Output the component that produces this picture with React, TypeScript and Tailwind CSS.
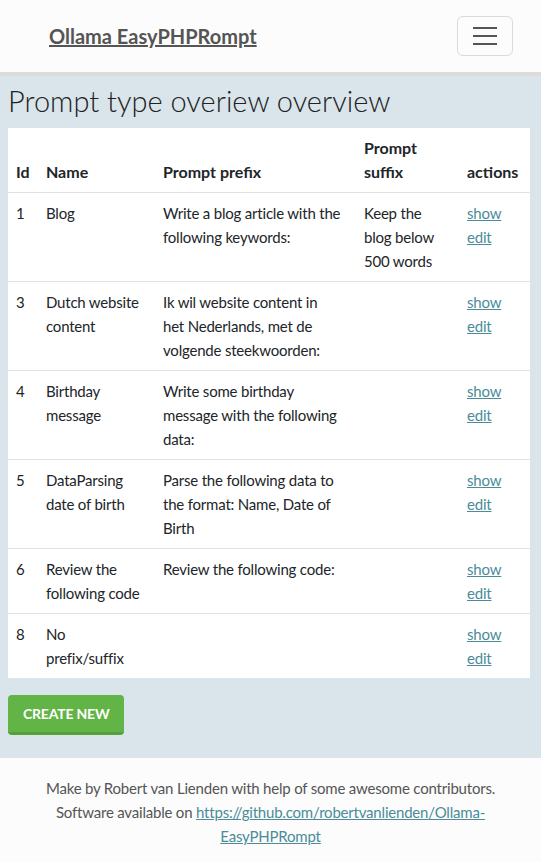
import React from "react";

const rows = [
  { id: "1", name: ["Blog"], prefix: ["Write a blog article with the", "following keywords:"], suffix: ["Keep the", "blog below", "500 words"] },
  { id: "3", name: ["Dutch website", "content"], prefix: ["Ik wil website content in", "het Nederlands, met de", "volgende steekwoorden:"], suffix: [] },
  { id: "4", name: ["Birthday", "message"], prefix: ["Write some birthday", "message with the following", "data:"], suffix: [] },
  { id: "5", name: ["DataParsing", "date of birth"], prefix: ["Parse the following data to", "the format: Name, Date of", "Birth"], suffix: [] },
  { id: "6", name: ["Review the", "following code"], prefix: ["Review the following code:"], suffix: [] },
  { id: "8", name: ["No", "prefix/suffix"], prefix: [], suffix: [] },
];

function Lines({ lines }: { lines: string[] }) {
  return (
    <>
      {lines.map((l, i) => (
        <span key={i} className="block whitespace-nowrap">{l}</span>
      ))}
    </>
  );
}

export default function App() {
  return (
    <div className="min-h-screen bg-[#d9e5ea] text-[#212529] text-[15px] tracking-[-0.2px] leading-[24px]" style={{ fontFamily: "Lato, 'Noto Sans', sans-serif" }}>
      <header className="h-[72px] bg-[#fcfcfc] border-b-4 border-[#dcdcdc] box-content flex items-center justify-between pl-[49px] pr-[28px]">
        <a href="#" className="text-[20px] tracking-normal font-bold text-[#555] underline">Ollama EasyPHPRompt</a>
        <button className="w-[56px] h-[40px] border border-[#dadada] rounded-[6px] flex flex-col items-center justify-center gap-[6px] bg-[#fcfcfc]">
          <span className="block w-[24px] h-[2px] bg-[#555]"></span>
          <span className="block w-[24px] h-[2px] bg-[#555]"></span>
          <span className="block w-[24px] h-[2px] bg-[#555]"></span>
        </button>
      </header>
      <main className="px-[8px] pt-[8px] pb-[23px]">
        <h1 className="text-[29px] tracking-normal leading-[34px] font-light text-[#222] mb-[10px]">Prompt type overiew overview</h1>
        <table className="w-[522px] bg-white table-fixed border-collapse">
          <colgroup>
            <col className="w-[30px]" />
            <col className="w-[117px]" />
            <col className="w-[201px]" />
            <col className="w-[103px]" />
            <col className="w-[71px]" />
          </colgroup>
          <thead>
            <tr className="border-b border-[#dee2e6] text-[16px] tracking-normal">
              <th className="text-left align-bottom p-[8px] font-bold">Id</th>
              <th className="text-left align-bottom p-[8px] font-bold">Name</th>
              <th className="text-left align-bottom p-[8px] font-bold">Prompt prefix</th>
              <th className="text-left align-bottom p-[8px] font-bold">Prompt<br />suffix</th>
              <th className="text-left align-bottom p-[8px] font-bold">actions</th>
            </tr>
          </thead>
          <tbody>
            {rows.map((r, i) => (
              <tr key={r.id} className={i < rows.length - 1 ? "border-b border-[#dee2e6]" : ""}>
                <td className="align-top p-[8px]">{r.id}</td>
                <td className="align-top p-[8px]"><Lines lines={r.name} /></td>
                <td className="align-top p-[8px]"><Lines lines={r.prefix} /></td>
                <td className="align-top p-[8px]"><Lines lines={r.suffix} /></td>
                <td className="align-top p-[8px]">
                  <a href="#" className="block w-fit text-[#4a8c99] underline">show</a>
                  <a href="#" className="block w-fit text-[#4a8c99] underline">edit</a>
                </td>
              </tr>
            ))}
          </tbody>
        </table>
        <button className="mt-[17px] h-[40px] px-[15px] bg-[#62b446] border-b-[3px] border-[#56a03c] rounded-[4px] text-white font-bold text-[14px] tracking-[-0.2px] uppercase">Create new</button>
      </main>
      <footer className="bg-[#fcfcfc] text-center text-[#555] pt-[18px] pb-[14px] px-[30px]">
        <p>Make by Robert van Lienden with help of some awesome contributors.</p>
        <p>
          Software available on{" "}
          <a href="#" className="text-[#4a8c99] underline">https://github.com/robertvanlienden/Ollama-<br />EasyPHPRompt</a>
        </p>
      </footer>
    </div>
  );
}
